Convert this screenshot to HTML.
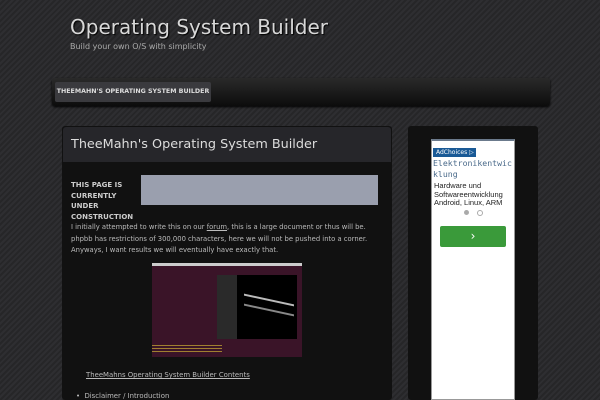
<!DOCTYPE html>
<html><head><style>
body{margin:0;width:600px;height:400px;overflow:hidden;font-family:"DejaVu Sans","Liberation Sans",sans-serif;background:#2b2b2e repeating-linear-gradient(135deg,#2e2e31 0 2px,#262628 2px 4px);position:relative}
.a{position:absolute;white-space:nowrap}
</style></head><body>
<div class="a" style="left:70px;top:15px;font-size:20px;color:#d8d8d8;text-shadow:1px 1px 1px #000">Operating System Builder</div>
<div class="a" style="left:70px;top:42px;font-size:8px;color:#aaa">Build your own O/S with simplicity</div>
<div class="a" style="left:52px;top:78px;width:498px;height:28px;background:linear-gradient(#2a2a2a,#0c0c0c);border-radius:3px;box-shadow:0 1px 2px #000"></div>
<div class="a" style="left:55px;top:82px;width:156px;height:20px;background:#3a3a3e;border-radius:2px;color:#ddd;font-size:6.3px;font-weight:bold;line-height:20px;text-align:center">THEEMAHN'S OPERATING SYSTEM BUILDER</div>
<div class="a" style="left:62px;top:126px;width:330px;height:274px;background:#111;border-radius:3px"></div>
<div class="a" style="left:63px;top:127px;width:328px;height:35px;background:#26262a;border-radius:3px 3px 0 0"></div>
<div class="a" style="left:71px;top:137px;font-size:12.8px;color:#ddd">TheeMahn's Operating System Builder</div>
<div class="a" style="left:141px;top:175px;width:237px;height:30px;background:#9a9fae"></div>
<div class="a" style="left:71px;top:180px;font-size:7px;font-weight:bold;color:#ccc;line-height:10.5px">THIS PAGE IS<br>CURRENTLY<br>UNDER<br>CONSTRUCTION</div>
<div class="a" style="left:71px;top:222px;font-size:6.8px;color:#bbb;line-height:11.5px">I initially attempted to write this on our <u>forum</u>, this is a large document or thus will be.<br>phpbb has restrictions of 300,000 characters, here we will not be pushed into a corner.<br>Anyways, I want results we will eventually have exactly that.</div>
<div class="a" style="left:152px;top:263px;width:150px;height:94px;background:#3a1428;overflow:hidden">
<div class="a" style="left:0;top:0;width:150px;height:3px;background:#ccc"></div>
<div class="a" style="left:65px;top:12px;width:80px;height:64px;background:#000"></div>
<div class="a" style="left:65px;top:12px;width:20px;height:64px;background:#2a2a2a"></div>
<div class="a" style="left:92px;top:36px;width:50px;height:8px;border-top:2px solid #bbb;border-bottom:2px solid #888;transform:skewY(12deg)"></div>
<div class="a" style="left:0;top:80px;width:70px;height:10px;background:repeating-linear-gradient(#3a1428 0 2px,#a08030 2px 3px)"></div>
</div>
<div class="a" style="left:86px;top:371px;font-size:6.9px;color:#bbb;text-decoration:underline">TheeMahns Operating System Builder Contents</div>
<div class="a" style="left:76px;top:392px;font-size:6.9px;color:#bbb">• &nbsp;Disclaimer / Introduction</div>
<div class="a" style="left:408px;top:126px;width:130px;height:274px;background:#111;border-radius:3px"></div>
<div class="a" style="left:431px;top:139px;width:84px;height:261px;background:#fff;border:1px solid #999;border-top:2px solid #6b7a8c;box-sizing:border-box"></div>
<div class="a" style="left:433px;top:148px;width:40px;height:9px;background:#1a5a96;color:#fff;font-size:6px;line-height:9px;padding-left:3px">AdChoices ▷</div>
<div class="a" style="left:433px;top:158px;width:80px;white-space:normal;font-family:'DejaVu Sans Mono',monospace;font-size:8.2px;color:#4a6a8a;line-height:11px;word-break:break-all">Elektronikentwicklung</div>
<div class="a" style="left:434px;top:182px;font-size:7.5px;color:#222;line-height:8.5px;font-family:'Liberation Sans',sans-serif">Hardware und<br>Softwareentwicklung<br>Android, Linux, ARM</div>
<div class="a" style="left:464px;top:210px;width:5px;height:5px;border-radius:50%;background:#aaa"></div>
<div class="a" style="left:477px;top:210px;width:4px;height:4px;border-radius:50%;border:1px solid #aaa"></div>
<div class="a" style="left:440px;top:226px;width:66px;height:21px;background:#3a9a3a;border-radius:2px;color:#fff;font-size:12px;text-align:center;line-height:21px">›</div>
</body></html>
